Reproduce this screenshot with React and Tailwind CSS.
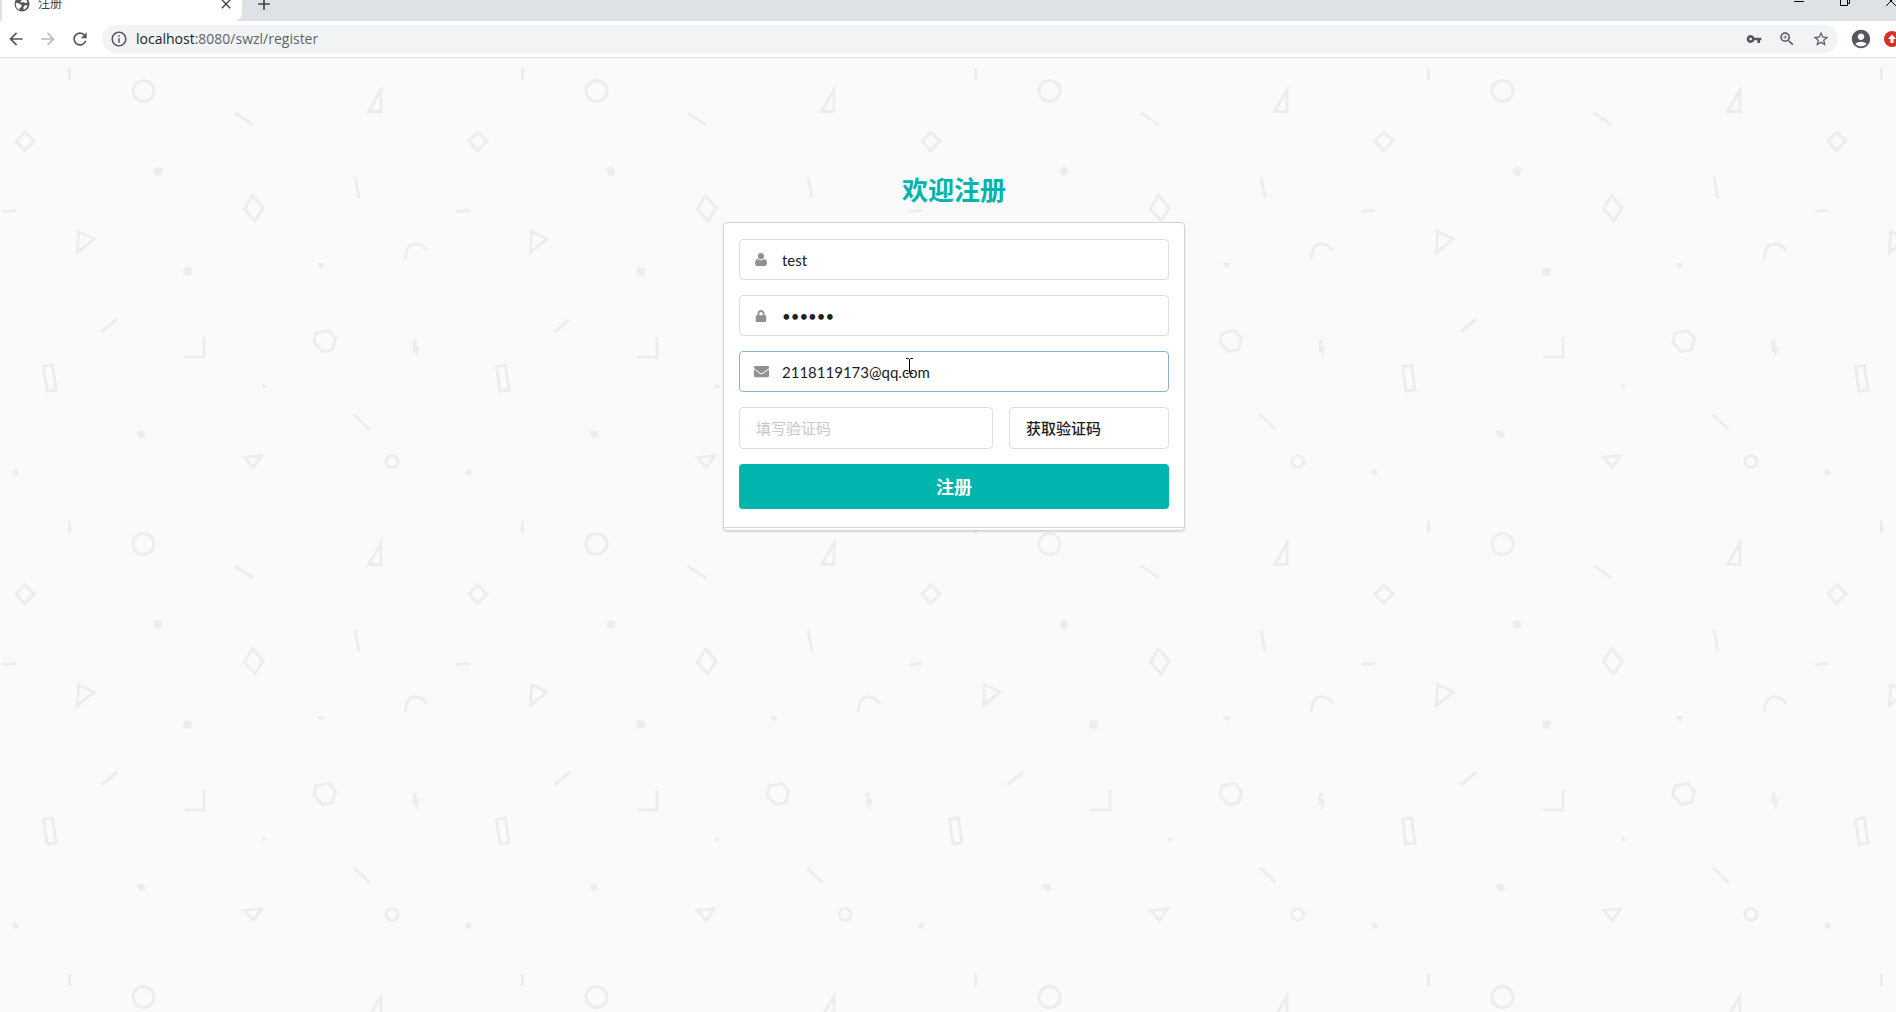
import React from "react";
import {
  MdArrowBack,
  MdArrowForward,
  MdRefresh,
  MdInfoOutline,
  MdVpnKey,
  MdZoomIn,
  MdStarBorder,
  MdAccountCircle,
  MdClose,
  MdAdd,
} from "react-icons/md";
import { FaLock, FaEnvelope } from "react-icons/fa";

const uiFont = "font-['Open_Sans','Noto_Sans_CJK_SC',sans-serif]";
const pageFont = "font-['Lato','Noto_Sans_CJK_SC',sans-serif]";

function UserIcon({ className }) {
  return (
    <svg viewBox="0 0 12 13" className={className} fill="currentColor" aria-hidden="true">
      <circle cx="6" cy="3.2" r="3.1" />
      <path d="M3 5.9C1 6 0 7.7 0 10.6 0 12.2 1 13 2.3 13h7.4c1.300 0 2.300-.8 2.300-2.400 0-2.900-1-4.600-3-4.700C8.200 6.700 7.100 7.200 6 7.200S3.800 6.700 3 5.900z" />
    </svg>
  );
}

function GlobeIcon({ className }) {
  return (
    <svg viewBox="0 0 16 16" className={className} aria-hidden="true">
      <circle cx="8" cy="8" r="7.5" fill="#54585d" />
      <path d="M8.500 2.200c2 .2 4.300 1.700 5 4l-2.300 1-1.500-1.200-2.200.8-1.200-1.600L8 4.200zM1.800 6.800l4 1 2 1.700-.6 1.700-1.700.8v2c-2-.8-4.200-3.300-3.700-7.200zM10.500 9.500l3-.3c-.3 2-1.700 3.800-3.500 4.600l-.8-2z" fill="#fff" />
    </svg>
  );
}

function TabStrip() {
  return (
    <header className="flex h-[21px] items-start overflow-hidden bg-[#dee1e6] pl-0.5">
      <div className="flex h-[21px] w-60 items-start rounded-br-lg bg-white pl-3 pr-2">
        <GlobeIcon className="-mt-1 size-4 shrink-0" />
        <span className="-mt-1 ml-2 flex-1 text-xs leading-4 text-[#3c4043]">注册</span>
        <button aria-label="关闭标签页" className="-mt-1 text-[#3c4043]">
          <MdClose className="size-4" />
        </button>
      </div>
      <button aria-label="新标签页" className="-mt-1.5 ml-3 text-[#3c4043]">
        <MdAdd className="size-5" />
      </button>
      <div className="ml-auto flex gap-9 text-black">
        <button aria-label="最小化">
          <svg className="h-3 w-2.5" viewBox="0 0 10 12" stroke="currentColor">
            <path d="M0 1.500h10" />
          </svg>
        </button>
        <button aria-label="还原">
          <svg className="h-3 w-2.5" viewBox="0 0 10 12" fill="none" stroke="currentColor">
            <path d="M.5-2.500h7v8h-7zM2.500-4.500h7v8h-2" />
          </svg>
        </button>
        <button aria-label="关闭">
          <svg className="h-3 w-2.5" viewBox="0 0 10 12" fill="none" stroke="currentColor">
            <path d="M0 6 10-4M0-4 10 6" />
          </svg>
        </button>
      </div>
    </header>
  );
}

function Toolbar() {
  return (
    <nav className="flex h-[37px] items-center border-b border-[#dadce0] bg-white pl-1 text-[#54585d]">
      <button aria-label="后退" className="px-0.5"><MdArrowBack className="size-5" /></button>
      <button aria-label="前进" className="ml-2 px-0.5 text-[#babcbe]"><MdArrowForward className="size-5" /></button>
      <button aria-label="重新加载" className="ml-2 px-0.5"><MdRefresh className="size-5" /></button>
      <div className="ml-2.5 flex h-7 flex-1 items-center rounded-full bg-[#f1f3f4] px-2">
        <MdInfoOutline className="size-[18px] shrink-0" />
        <a href="#" className="ml-2 flex-1 text-sm leading-5 text-[#5f6368]">
          <span className="text-[#202124]">localhost</span>:8080/swzl/register
        </a>
        <div className="flex gap-4">
          <button aria-label="密码"><MdVpnKey className="size-4" /></button>
          <button aria-label="缩放"><MdZoomIn className="size-[18px]" /></button>
          <button aria-label="收藏"><MdStarBorder className="size-[18px]" /></button>
        </div>
      </div>
      <button aria-label="用户" className="ml-3"><MdAccountCircle className="size-[22px]" /></button>
      <button aria-label="更新" className="-mr-1 ml-3">
        <svg className="size-4" viewBox="0 0 16 16">
          <circle cx="8" cy="8" r="8" fill="#d93025" />
          <path d="M8 3.500 12 8H9.500v4h-3V8H4z" fill="#fff" />
        </svg>
      </button>
    </nav>
  );
}

function PatternBackdrop() {
  return (
    <svg className="absolute inset-0 size-full" aria-hidden="true">
      <defs>
        <pattern id="shapes" width="453" height="453" patternUnits="userSpaceOnUse">
          <g fill="none" stroke="#ededed" strokeWidth="3">
            <path d="M69.500 10v12M235 55l18 12M355 119l4 21M3 153.500l13-1M101.500 274l15.500-13M204 279v20h-19.500M354 356.500l15.500 15" />
            <circle cx="143.500" cy="33" r="10.500" />
            <circle cx="392" cy="403.500" r="6" />
            <path d="M381 32v21.500h-12.500zM25 74l9 9-9.500 9.500-8.500-9.500zM252.500 137.500l10.500 12.500-8 13-10.500-12zM78.500 173.500l15.500 7.500-16.500 13.500z" />
            <path d="M405.500 201c0-9 3-15 10-15 5 0 9 3 11.500 6.500" />
            <path d="M316 275l13-2.500 6.500 8-3 11-10 2-8.500-9zM43.500 308.500l9-1.500 3.500 25-9 1zM244.500 399.500l17-2-8 12z" />
          </g>
          <g fill="#ededed">
            <circle cx="158" cy="113.500" r="4.500" />
            <circle cx="15.500" cy="414.500" r="3" />
            <path d="M184 209l8 1-1 8-8-1zM316.500 205l8 0-3.500 6zM262.500 325.500l5 3-5 3zM136.500 373l7-.5 2.500 7-7 .5zM412.500 282l4.500-1-1 6.500 3.500.5-3.500 13-.5-7-3-.5z" />
          </g>
        </pattern>
      </defs>
      <rect width="100%" height="100%" fill="url(#shapes)" />
    </svg>
  );
}

function Field({ icon, label, focused, ...input }) {
  return (
    <label
      className={
        "flex h-[41px] items-center rounded border bg-white pl-3 " +
        (focused ? "border-[#8bb3d0]" : "border-[#dededf]")
      }
    >
      <span className="flex w-[18px] justify-center text-[#919191]">{icon}</span>
      <input
        aria-label={label}
        {...input}
        className="ml-3 min-w-0 flex-1 bg-transparent text-[15px] leading-5 text-[#212121] outline-none"
      />
    </label>
  );
}

function RegisterForm() {
  return (
    <section className="relative w-[462px]">
      <h2 className="text-center text-[26px] leading-8 font-bold text-[#00b5ad]">欢迎注册</h2>
      <form
        onSubmit={(e) => e.preventDefault()}
        className="mt-4 rounded border border-[#d4d4d5] bg-white shadow-[0_1px_2px_rgba(34,36,38,0.15)]"
      >
        <div className="flex flex-col gap-[15px] border-b border-[#d4d4d5] px-[15px] pt-4 pb-[18px]">
          <Field label="用户名" type="text" defaultValue="test" icon={<UserIcon className="h-[13px] w-3" />} />
          <Field label="密码" type="password" defaultValue="123456" icon={<FaLock className="size-3" />} />
          <Field label="邮箱" type="text" defaultValue="2118119173@qq.com" focused icon={<FaEnvelope className="size-[15px]" />} />
          <div className="flex gap-4">
            <input
              aria-label="验证码"
              placeholder="填写验证码"
              className="h-[42px] min-w-0 flex-1 rounded border border-[#dededf] bg-white px-4 text-[15px] outline-none placeholder:text-[#c7c7c7]"
            />
            <button
              type="button"
              className="h-[42px] w-40 rounded border border-[#dededf] bg-white px-4 text-left text-[15px] font-medium text-[#1b1c1d]"
            >
              获取验证码
            </button>
          </div>
          <button type="submit" className="h-[45px] rounded bg-[#00b5ad] text-lg font-bold text-white">
            注册
          </button>
        </div>
        <div className="h-0.5" />
      </form>
    </section>
  );
}

function TextCursor() {
  return (
    <svg className="absolute top-[300px] left-[906px] h-4 w-[7px]" viewBox="0 0 7 16" fill="none" stroke="#000" aria-hidden="true">
      <path d="M0 .5h2.500l1 1 1-1H7M3.500 1v14M0 15.500h2.500l1-1 1 1H7" />
    </svg>
  );
}

export default function App() {
  return (
    <div className={"flex h-screen flex-col overflow-hidden " + uiFont}>
      <TabStrip />
      <Toolbar />
      <main className={"relative flex flex-1 justify-center bg-[#fafafa] pt-[116px] pl-3 " + pageFont}>
        <PatternBackdrop />
        <RegisterForm />
        <TextCursor />
      </main>
    </div>
  );
}
